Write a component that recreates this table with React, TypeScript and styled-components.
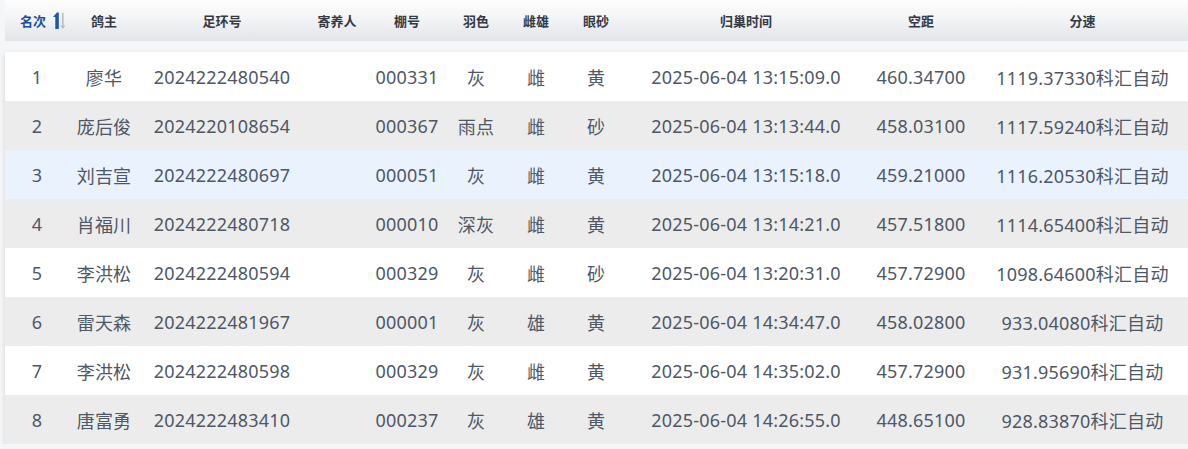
import React from "react";
import styled, { createGlobalStyle } from "styled-components";

const GlobalStyle = createGlobalStyle`
  html, body { margin: 0; padding: 0; background: #f5f6f8; }
  body { font-family: "Noto Sans", "Noto Sans CJK SC", sans-serif; }
  * { box-sizing: border-box; }
`;

const COLS = "64px 70px 166px 64px 76px 62px 58px 62px 238px 112px 1fr";

const Page = styled.div`
  padding-left: 5px;
  width: 1188px;
  overflow: hidden;
`;

const HeaderRow = styled.div`
  display: grid;
  grid-template-columns: ${COLS};
  height: 41px;
  background: linear-gradient(to bottom, #fdfdfd 0%, #f3f4f6 45%, #e3e4e8 100%);
  align-items: center;
`;

const HeadCell = styled.div<{ $active?: boolean }>`
  display: flex;
  align-items: center;
  justify-content: center;
  padding-left: ${(p) => (p.$active ? "12px" : "0")};
  font-size: 13px;
  font-weight: 700;
  color: ${(p) => (p.$active ? "#1b4f9c" : "#333a44")};
  font-family: "Noto Sans CJK SC", "Noto Sans", sans-serif;
  white-space: nowrap;
`;

const SortIcon = styled.svg`
  margin-left: 6px;
  width: 14px;
  height: 19px;
  flex: none;
`;

const Body = styled.div`
  margin-top: 11px;
  box-shadow: 0 2px 5px rgba(0, 0, 0, 0.14);
`;

const Row = styled.div<{ $tone: "white" | "gray" | "hover" }>`
  display: grid;
  grid-template-columns: ${COLS};
  height: 49px;
  align-items: center;
  background: ${(p) =>
    p.$tone === "white" ? "#ffffff" : p.$tone === "gray" ? "#ececec" : "#eaf2fd"};
`;

const Cell = styled.div`
  text-align: center;
  font-size: 18px;
  letter-spacing: 0.2px;
  color: #4e5766;
  white-space: nowrap;
  font-family: "Noto Sans", "Noto Sans CJK SC", sans-serif;
`;

const headers = ["鸽主", "足环号", "寄养人", "棚号", "羽色", "雌雄", "眼砂", "归巢时间", "空距", "分速"];

type Rec = [string, string, string, string, string, string, string, string, string, string, string];

const data: Rec[] = [
  ["1", "廖华", "2024222480540", "", "000331", "灰", "雌", "黄", "2025-06-04 13:15:09.0", "460.34700", "1119.37330科汇自动"],
  ["2", "庞后俊", "2024220108654", "", "000367", "雨点", "雌", "砂", "2025-06-04 13:13:44.0", "458.03100", "1117.59240科汇自动"],
  ["3", "刘吉宣", "2024222480697", "", "000051", "灰", "雌", "黄", "2025-06-04 13:15:18.0", "459.21000", "1116.20530科汇自动"],
  ["4", "肖福川", "2024222480718", "", "000010", "深灰", "雌", "黄", "2025-06-04 13:14:21.0", "457.51800", "1114.65400科汇自动"],
  ["5", "李洪松", "2024222480594", "", "000329", "灰", "雌", "砂", "2025-06-04 13:20:31.0", "457.72900", "1098.64600科汇自动"],
  ["6", "雷天森", "2024222481967", "", "000001", "灰", "雄", "黄", "2025-06-04 14:34:47.0", "458.02800", "933.04080科汇自动"],
  ["7", "李洪松", "2024222480598", "", "000329", "灰", "雌", "黄", "2025-06-04 14:35:02.0", "457.72900", "931.95690科汇自动"],
  ["8", "唐富勇", "2024222483410", "", "000237", "灰", "雄", "黄", "2025-06-04 14:26:55.0", "448.65100", "928.83870科汇自动"],
];

export default function App() {
  return (
    <>
      <GlobalStyle />
      <Page>
        <HeaderRow>
          <HeadCell $active>
            名次
            <SortIcon viewBox="0 0 14 19">
              <path d="M5 1.5 L1 6 L3.3 6 L3.3 18 L6.8 18 L6.8 1.5 Z" fill="#1b56b0" />
              <path d="M10 2 L10 14.5 L8.2 14.5 L10.8 18 L13.4 14.5 L11.6 14.5 L11.6 2 Z" fill="#b8bcc4" />
            </SortIcon>
          </HeadCell>
          {headers.map((h) => (
            <HeadCell key={h}>{h}</HeadCell>
          ))}
        </HeaderRow>
        <Body>
          {data.map((r, i) => (
            <Row key={i} $tone={i === 2 ? "hover" : i % 2 === 0 ? "white" : "gray"}>
              {r.map((c, j) => (
                <Cell key={j}>{c}</Cell>
              ))}
            </Row>
          ))}
        </Body>
      </Page>
    </>
  );
}
